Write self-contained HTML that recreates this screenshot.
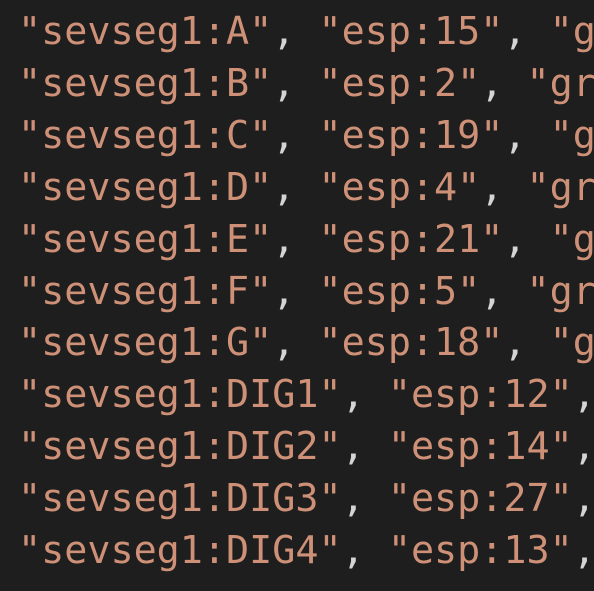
<html><head><style>
body{margin:0;background:#1e1e1e;width:594px;height:591px;overflow:hidden}
pre{margin:0;padding:6px 0 0 18px;width:576px;height:585px;overflow:hidden;font-family:"DejaVu Sans Mono",monospace;font-size:38.4px;line-height:51.9px;color:#ce9178;white-space:pre}
i{font-style:normal;color:#d4d4d4}
</style></head><body><pre>"sevseg1:A"<i>,</i> "esp:15"<i>,</i> "g
"sevseg1:B"<i>,</i> "esp:2"<i>,</i> "gr
"sevseg1:C"<i>,</i> "esp:19"<i>,</i> "g
"sevseg1:D"<i>,</i> "esp:4"<i>,</i> "gr
"sevseg1:E"<i>,</i> "esp:21"<i>,</i> "g
"sevseg1:F"<i>,</i> "esp:5"<i>,</i> "gr
"sevseg1:G"<i>,</i> "esp:18"<i>,</i> "g
"sevseg1:DIG1"<i>,</i> "esp:12"<i>,</i>
"sevseg1:DIG2"<i>,</i> "esp:14"<i>,</i>
"sevseg1:DIG3"<i>,</i> "esp:27"<i>,</i>
"sevseg1:DIG4"<i>,</i> "esp:13"<i>,</i></pre></body></html>
